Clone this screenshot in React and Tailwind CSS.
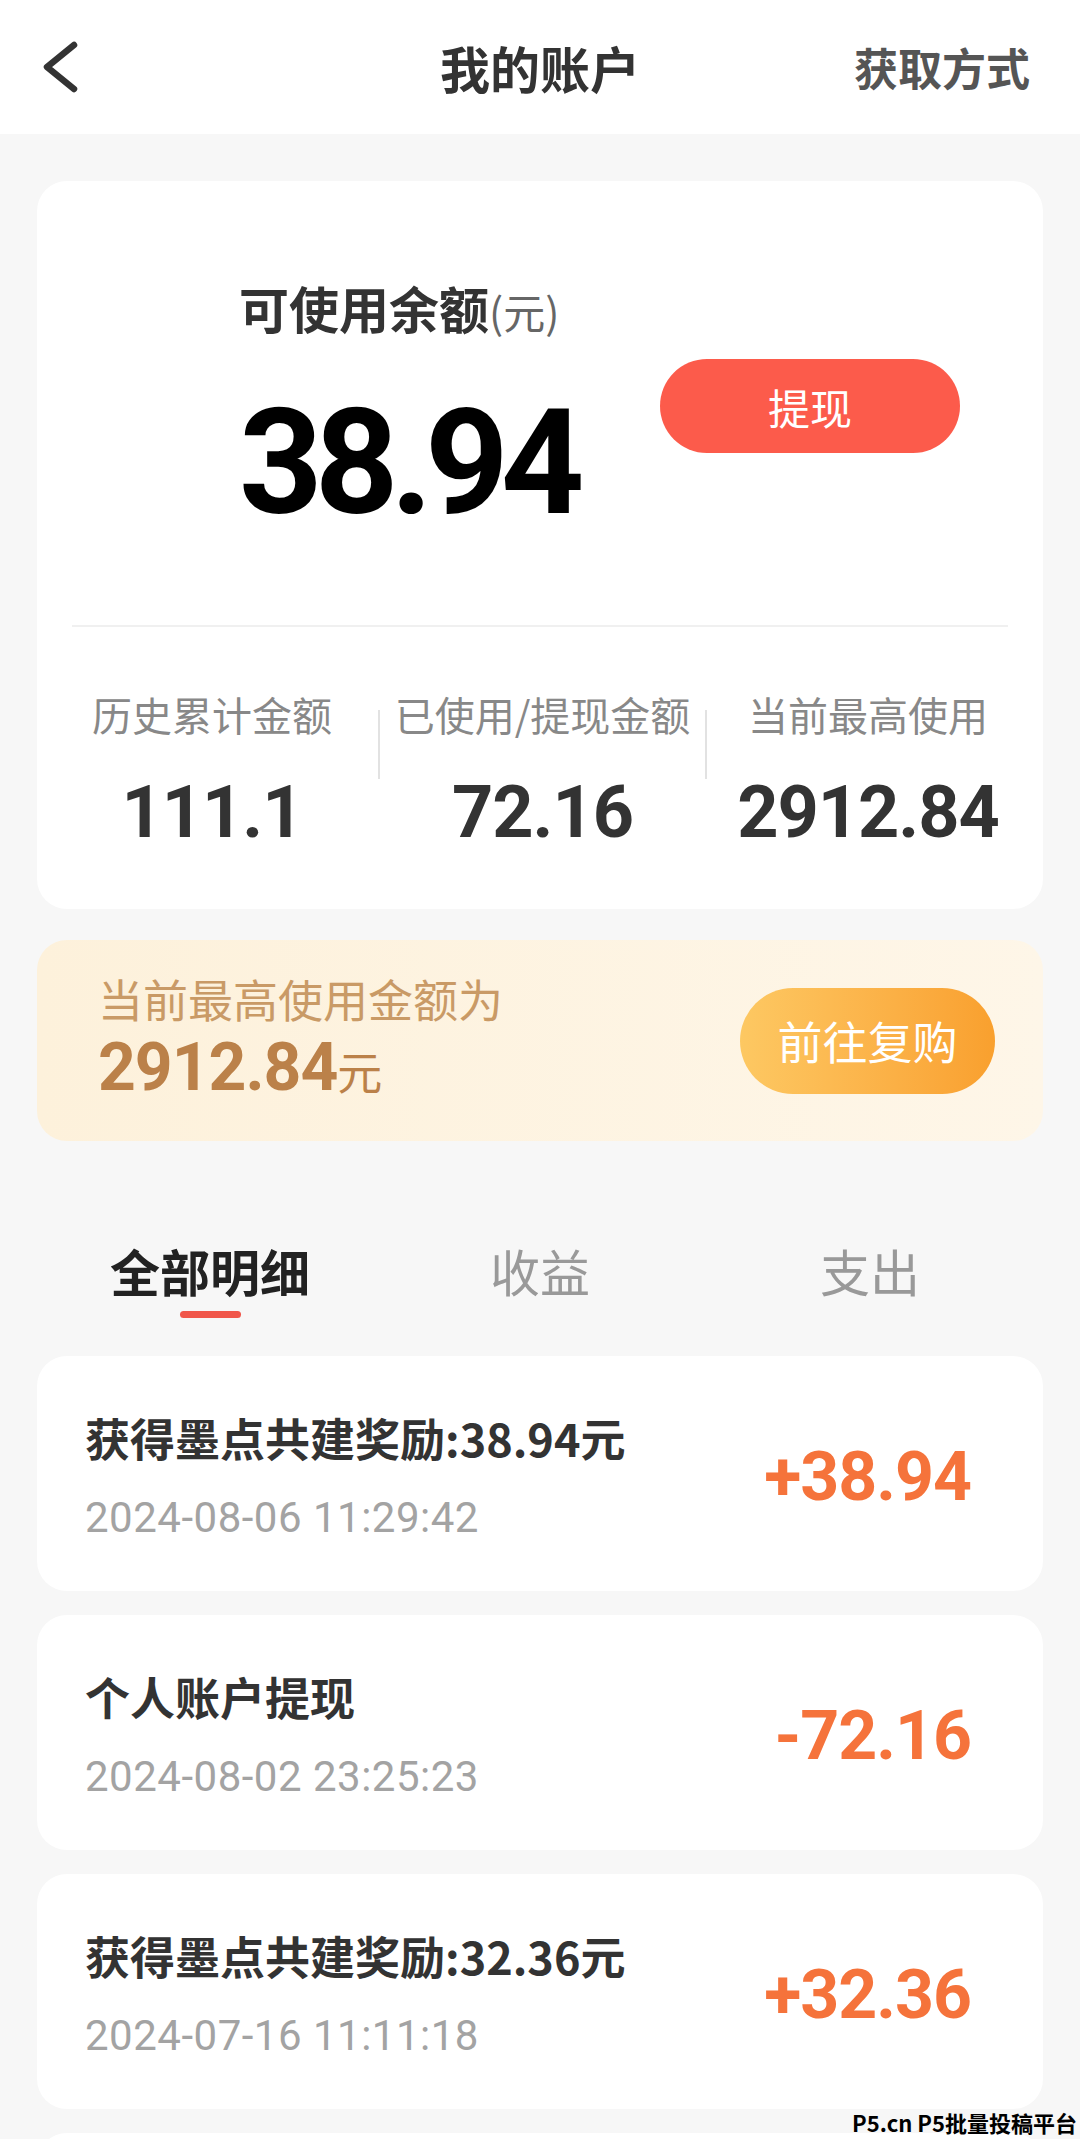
const records = [
  { title: "获得墨点共建奖励:38.94元", time: "2024-08-06 11:29:42", amount: "+38.94" },
  { title: "个人账户提现", time: "2024-08-02 23:25:23", amount: "-72.16" },
  { title: "获得墨点共建奖励:32.36元", time: "2024-07-16 11:11:18", amount: "+32.36" },
];

// Single row in the detail list
function RecordCard({ title, time, amount }) {
  return (
    <div className="flex items-center justify-between rounded-[30px] bg-white pl-[48px] pr-[72px] pt-[55px] pb-[49px]">
      <div>
        <p className="text-[45px] leading-[54px] font-bold text-[#333333]">{title}</p>
        <p className="mt-[29px] text-[42px] leading-[48px] tracking-[0.5px] text-[#a3a3a3] font-['Roboto',sans-serif]">{time}</p>
      </div>
      <span className="text-[68px] leading-none font-bold tracking-[-1px] text-[#f5733b] font-['Roboto',sans-serif]">
        {amount}
      </span>
    </div>
  );
}

function Stat({ label, value, className }) {
  return (
    <div className={`flex flex-col items-center ${className}`}>
      <p className="text-[40px] leading-[48px] text-[#888888] whitespace-nowrap">{label}</p>
      <p className="mt-[39px] text-[72px] leading-[72px] font-bold text-[#333333] tracking-[-1px] font-['Roboto',sans-serif]">
        {value}
      </p>
    </div>
  );
}

export default function App() {
  return (
    <div className="relative h-[2139px] overflow-hidden bg-[#f7f7f7] font-['Noto_Sans_CJK_SC','Noto_Sans',sans-serif]">
      {/* Header */}
      <header className="grid h-[134px] grid-cols-[1fr_auto_1fr] items-center bg-white">
        <div className="pl-[40px]">
          <svg width="44" height="56" viewBox="40 41 44 56" fill="none">
            <path d="M74 47 L47 69 L74 91" stroke="#333333" strokeWidth="6.5" strokeLinecap="round" strokeLinejoin="round" />
          </svg>
        </div>
        <h1 className="text-[50px] font-bold text-[#333333]">我的账户</h1>
        <div className="pr-[50px] text-right text-[44px] font-bold text-[#555555]">获取方式</div>
      </header>

      {/* Balance card */}
      <div className="mx-[37px] mt-[47px] rounded-[30px] bg-white pt-[96px] pb-[60px]">
        <div className="flex items-start justify-between pl-[202px] pr-[83px]">
          <div>
            <p className="text-[50px] leading-[60px] font-bold text-[#333333]">
              可使用余额<span className="text-[42px] font-normal text-[#666666]">(元)</span>
            </p>
            <p className="mt-[50px] text-[146px] leading-[146px] font-bold tracking-[-8px] text-black font-['Roboto',sans-serif]">
              38.94
            </p>
          </div>
          <button className="mt-[82px] h-[94px] w-[300px] rounded-full bg-[#fc5b4b] text-[42px] text-white">
            提现
          </button>
        </div>

        <div className="mx-[35px] mt-[88px] h-[2px] bg-[#f0f0f0]" />

        <div className="mt-[63px] flex items-start">
          <Stat label="历史累计金额" value="111.1" className="w-[341px] pl-[9px]" />
          <div className="mt-[20px] h-[69px] w-[2px] bg-[#e2e2e2]" />
          <Stat label="已使用/提现金额" value="72.16" className="w-[325px]" />
          <div className="mt-[20px] h-[69px] w-[2px] bg-[#e2e2e2]" />
          <Stat label="当前最高使用" value="2912.84" className="flex-1 pr-[14px]" />
        </div>
      </div>

      {/* Repurchase banner */}
      <div className="mx-[37px] mt-[31px] flex h-[201px] items-center justify-between rounded-[30px] bg-gradient-to-r from-[#fdf1db] to-[#fef6e8] pl-[61px] pr-[48px]">
        <div className="-mt-[8px]">
          <p className="text-[45px] leading-[54px] text-[#c99a66]">当前最高使用金额为</p>
          <p className="mt-[9px] flex items-baseline text-[#bb8149]">
            <span className="text-[66px] leading-[66px] font-bold tracking-[-1px] font-['Roboto',sans-serif]">2912.84</span>
            <span className="text-[45px] leading-[54px]">元</span>
          </p>
        </div>
        <button className="h-[106px] w-[255px] rounded-full bg-gradient-to-r from-[#fdc862] to-[#f9a02e] text-[45px] text-white">
          前往复购
        </button>
      </div>

      {/* Tabs */}
      <div className="mt-[99px] grid grid-cols-3 px-[45px]">
        <div className="flex flex-col items-center">
          <span className="text-[50px] leading-[60px] font-bold text-[#222222]">全部明细</span>
          <span className="mt-[11px] h-[7px] w-[61px] rounded-full bg-[#f0564a]" />
        </div>
        <div className="text-center text-[50px] leading-[60px] text-[#999999]">收益</div>
        <div className="text-center text-[50px] leading-[60px] text-[#999999]">支出</div>
      </div>

      {/* Records */}
      <div className="mx-[37px] mt-[38px] flex flex-col gap-[24px]">
        {records.map((r) => (
          <RecordCard key={r.time} {...r} />
        ))}
        <div className="h-[235px] rounded-[30px] bg-white" />
      </div>

      <div className="absolute bottom-[4px] right-[3px] text-[22px] leading-[26px] font-bold text-black">
        P5.cn P5批量投稿平台
      </div>
    </div>
  );
}
